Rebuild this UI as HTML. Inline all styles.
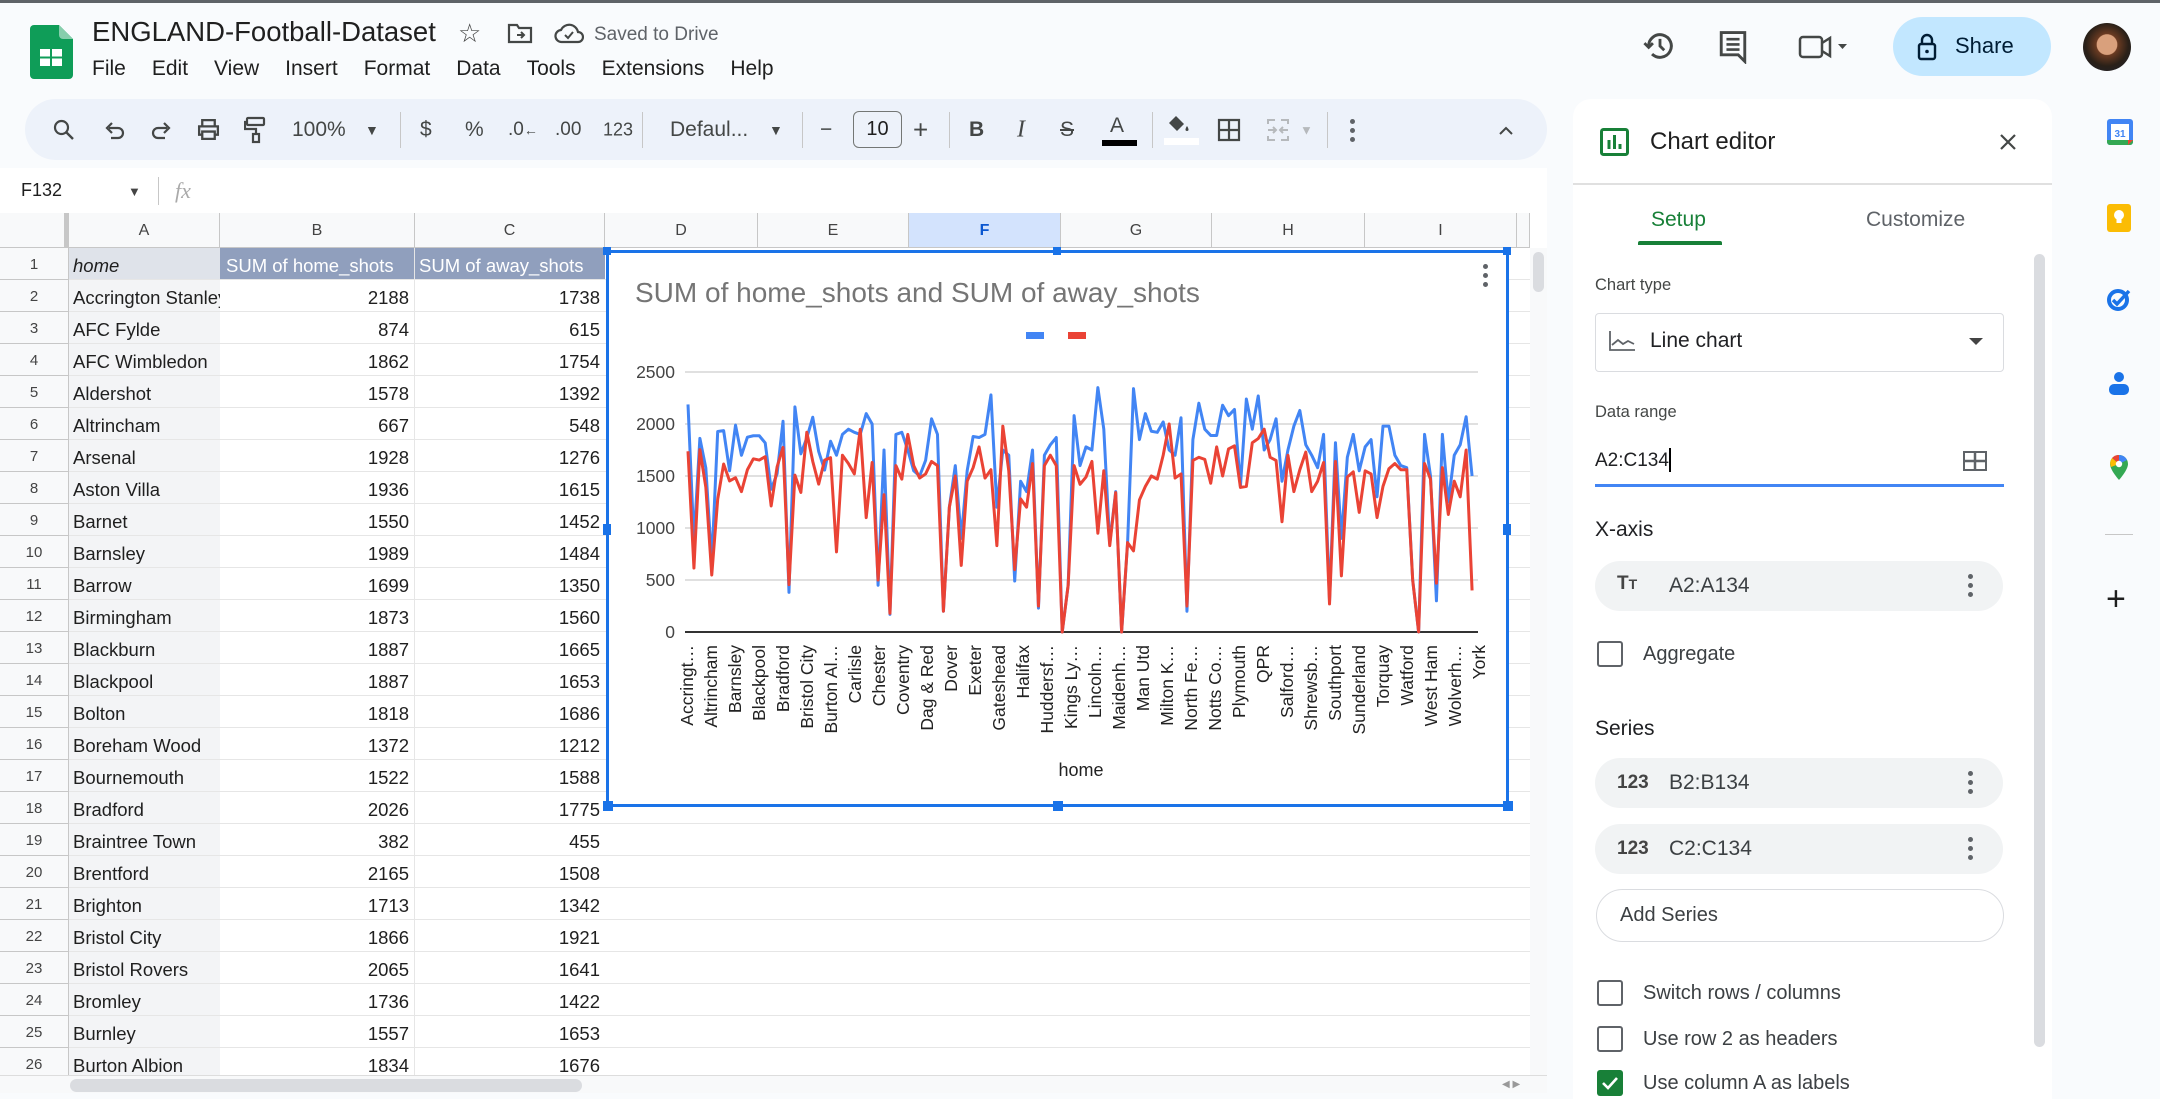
<!DOCTYPE html>
<html><head><meta charset="utf-8">
<style>
*{box-sizing:border-box;margin:0;padding:0}
body{width:2160px;height:1093px;overflow:hidden;background:#f9fbfd;font-family:"Liberation Sans",Arial,sans-serif;color:#1f1f1f;position:relative}
.a{position:absolute}
.menu span{margin-right:26px}
.tb{position:absolute;top:130px;transform:translateY(-50%);color:#444746;font-size:21px}
.sep{position:absolute;top:112px;width:1px;height:36px;background:#c7c7c7}
.ch{position:absolute;top:213px;height:35px;border-right:1px solid #c7c7c7;border-bottom:1px solid #c7c7c7;background:#f8f9fa;font-size:16px;color:#444;text-align:center;line-height:35px}
.row{position:absolute;left:0;height:32px;width:1530px;font-size:18.5px;line-height:35px}
.row .n{position:absolute;left:0;width:69px;height:32px;background:#f8f9fa;border-right:1px solid #c7c7c7;border-bottom:1px solid #c7c7c7;text-align:center;font-size:15px;color:#444;line-height:33px}
.row .c1{position:absolute;left:69px;width:151px;height:32px;background:#f3f4f6;padding-left:4px;white-space:nowrap;overflow:hidden;border-bottom:1px solid #e6e6e6}
.row .c2{position:absolute;left:220px;width:195px;height:32px;text-align:right;padding-right:5px;border-bottom:1px solid #e6e6e6;border-right:1px solid #e6e6e6}
.row .c3{position:absolute;left:415px;width:190px;height:32px;text-align:right;padding-right:5px;border-bottom:1px solid #e6e6e6}
.row .rest{position:absolute;left:605px;width:925px;height:32px;border-bottom:1px solid #e6e6e6}
.lbl{font-size:16.5px;color:#444746}
.chip{position:absolute;left:1595px;width:408px;height:50px;border-radius:25px;background:#f1f3f4}
.chip .t{position:absolute;left:74px;top:13px;font-size:21px;color:#3c4043}
.chip .ic{position:absolute;left:22px;top:14px;font-size:19px;font-weight:bold;color:#444}
.chip .dots{position:absolute;right:30px;top:13px;width:5px}
.dots i{display:block;width:5px;height:5px;border-radius:50%;background:#5f6368;margin-bottom:4px}
.cb{position:absolute;left:1597px;width:26px;height:26px;border:2.5px solid #5f6368;border-radius:3px}
.cbt{position:absolute;left:1643px;font-size:20px;color:#3c4043}
</style></head><body>
<div class="a" style="left:0;top:0;width:2160px;height:3px;background:#5f6368"></div>

<svg class="a" style="left:30px;top:25px" width="43" height="54" viewBox="0 0 43 54"><path d="M4 0h25l14 14v36a4 4 0 0 1-4 4H4a4 4 0 0 1-4-4V4a4 4 0 0 1 4-4z" fill="#0f9d58"/><path d="M29 0v10a4 4 0 0 0 4 4h10z" fill="#87ceac"/><rect x="10" y="24" width="22" height="17" fill="#fff"/><rect x="20" y="24" width="2" height="17" fill="#0f9d58"/><rect x="10" y="31.5" width="22" height="2" fill="#0f9d58"/></svg>
<div class="a" style="left:92px;top:16px;font-size:27.5px;color:#1f1f1f">ENGLAND-Football-Dataset</div>
<div class="a" style="left:458px;top:18px;font-size:26px;color:#444">☆</div>
<svg class="a" style="left:507px;top:22px" width="26" height="22" viewBox="0 0 26 22"><path d="M2 3h8l2 3h12v14H2z" fill="none" stroke="#444746" stroke-width="2.2"/><path d="M10 13h7m-3-3l3 3-3 3" fill="none" stroke="#444746" stroke-width="2"/></svg>
<svg class="a" style="left:554px;top:22px" width="30" height="22" viewBox="0 0 30 22"><path d="M8 20a6 6 0 0 1-1-12 9 9 0 0 1 17 2 5 5 0 0 1 0 10z" fill="none" stroke="#444746" stroke-width="2.2"/><path d="M11 13l3 3 5-6" fill="none" stroke="#444746" stroke-width="2"/></svg>
<div class="a" style="left:594px;top:24px;font-size:19px;color:#5f6368">Saved to Drive</div>
<div class="a menu" style="left:92px;top:57px;font-size:21px;color:#1f1f1f;white-space:nowrap"><span>File</span><span>Edit</span><span>View</span><span>Insert</span><span>Format</span><span>Data</span><span>Tools</span><span>Extensions</span><span>Help</span></div>

<svg class="a" style="left:1643px;top:29px" width="34" height="34" viewBox="0 0 24 24"><path d="M4 12a8 8 0 1 1 2.4 5.7" fill="none" stroke="#444746" stroke-width="2.1"/><path d="M1 10l3 3 3-3" fill="none" stroke="#444746" stroke-width="2"/><path d="M12 7v5l3 3" fill="none" stroke="#444746" stroke-width="2"/></svg>
<svg class="a" style="left:1717px;top:30px" width="32" height="34" viewBox="0 0 24 26"><path d="M3 2h18v17H21v5l-5-5H3z" fill="none" stroke="#444746" stroke-width="2.2"/><path d="M7 7h10M7 11h10M7 15h10" stroke="#444746" stroke-width="2"/></svg>
<svg class="a" style="left:1798px;top:33px" width="50" height="28" viewBox="0 0 50 28"><rect x="2" y="4" width="22" height="20" rx="3" fill="none" stroke="#444746" stroke-width="2.5"/><path d="M24 10l8-5v18l-8-5" fill="none" stroke="#444746" stroke-width="2.5"/><path d="M40 11h9l-4.5 5z" fill="#444746"/></svg>
<div class="a" style="left:1893px;top:17px;width:158px;height:59px;border-radius:30px;background:#c2e7ff"></div>
<svg class="a" style="left:1917px;top:33px" width="20" height="28" viewBox="0 0 20 28"><path d="M5 11V7a5 5 0 0 1 10 0v4" fill="none" stroke="#001d35" stroke-width="2.4"/><rect x="2" y="11" width="16" height="15" rx="2" fill="none" stroke="#001d35" stroke-width="2.4"/><circle cx="10" cy="18.5" r="1.8" fill="#001d35"/></svg>
<div class="a" style="left:1955px;top:33px;font-size:22px;color:#001d35">Share</div>
<div class="a" style="left:2083px;top:23px;width:48px;height:48px;border-radius:50%;background:radial-gradient(circle at 50% 45%,#d9a07c 0 28%,#6b3b22 30%,#2a2018 60%,#1c2230 100%)"></div>

<div class="a" style="left:25px;top:99px;width:1522px;height:61px;border-radius:31px;background:#edf2fa"></div>
<svg class="a" style="left:52px;top:118px" width="24" height="24" viewBox="0 0 24 24"><circle cx="9.5" cy="9.5" r="6.5" fill="none" stroke="#444746" stroke-width="2.2"/><path d="M14 14l7 7" stroke="#444746" stroke-width="2.4"/></svg>
<svg class="a" style="left:104px;top:119px" width="22" height="22" viewBox="0 0 22 22"><path d="M5 9h9a5 5 0 0 1 0 10H7" fill="none" stroke="#444746" stroke-width="2.2"/><path d="M8 4L3 9l5 5" fill="none" stroke="#444746" stroke-width="2.2"/></svg>
<svg class="a" style="left:150px;top:119px" width="22" height="22" viewBox="0 0 22 22"><path d="M17 9H8a5 5 0 0 0 0 10h7" fill="none" stroke="#444746" stroke-width="2.2"/><path d="M14 4l5 5-5 5" fill="none" stroke="#444746" stroke-width="2.2"/></svg>
<svg class="a" style="left:196px;top:117px" width="25" height="25" viewBox="0 0 24 24"><path d="M6 8V3h12v5M6 17H3V9h18v8h-3M6 14h12v7H6z" fill="none" stroke="#444746" stroke-width="2.2"/></svg>
<svg class="a" style="left:244px;top:116px" width="24" height="28" viewBox="0 0 24 28"><rect x="3" y="2" width="17" height="7" rx="1" fill="none" stroke="#444746" stroke-width="2.2"/><path d="M3 6H1v7h11v5" fill="none" stroke="#444746" stroke-width="2.2"/><rect x="9" y="18" width="6" height="8" fill="none" stroke="#444746" stroke-width="2.2"/></svg>
<div class="tb" style="left:292px">100%</div>
<div class="tb" style="left:365px;font-size:14px">▼</div>
<div class="sep" style="left:400px"></div>
<div class="tb" style="left:420px">$</div>
<div class="tb" style="left:465px">%</div>
<div class="tb" style="left:508px;font-size:19px">.0<span style="font-size:14px">←</span></div>
<div class="tb" style="left:555px;font-size:19px">.00</div>
<div class="tb" style="left:603px;font-size:18px">123</div>
<div class="sep" style="left:642px"></div>
<div class="tb" style="left:670px">Defaul...</div>
<div class="tb" style="left:769px;font-size:14px">▼</div>
<div class="sep" style="left:802px"></div>
<div class="tb" style="left:820px">−</div>
<div class="a" style="left:853px;top:111px;width:49px;height:37px;border:1.5px solid #747775;border-radius:6px;font-size:20px;text-align:center;line-height:34px;color:#1f1f1f">10</div>
<div class="tb" style="left:913px;font-size:26px">+</div>
<div class="sep" style="left:949px"></div>
<div class="tb" style="left:969px;font-weight:bold">B</div>
<div class="tb" style="left:1017px;font-style:italic;font-family:'Liberation Serif',serif;font-size:24px">I</div>
<div class="tb" style="left:1060px;text-decoration:line-through">S</div>
<div class="tb" style="left:1110px;top:126px">A</div>
<div class="a" style="left:1102px;top:140px;width:35px;height:6px;background:#000"></div>
<div class="sep" style="left:1152px"></div>
<svg class="a" style="left:1166px;top:114px" width="26" height="22" viewBox="0 0 26 22"><path d="M10 2l8 8-7 7-8-8z" fill="#444746"/><path d="M21 12c-2 3-2 5 0 5s2-2 0-5z" fill="#444746"/></svg>
<div class="a" style="left:1164px;top:138px;width:35px;height:7px;background:#fff"></div>
<svg class="a" style="left:1217px;top:118px" width="24" height="24" viewBox="0 0 24 24"><path d="M2 2h20v20H2zM12 2v20M2 12h20" fill="none" stroke="#444746" stroke-width="2.2"/></svg>
<svg class="a" style="left:1266px;top:118px" width="24" height="24" viewBox="0 0 24 24"><path d="M2 6V2h7M15 2h7v4M2 18v4h7M15 22h7v-4M2 12h8M14 12h8M7 9l3 3-3 3M17 9l-3 3 3 3" fill="none" stroke="#b6b9bc" stroke-width="2"/></svg>
<div class="tb" style="left:1300px;font-size:13px;color:#b6b9bc">▼</div>
<div class="sep" style="left:1327px"></div>
<div class="a dots" style="left:1350px;top:119px"><i></i><i></i><i></i></div>
<svg class="a" style="left:1498px;top:124px" width="16" height="12" viewBox="0 0 16 12"><path d="M2 10l6-6 6 6" fill="none" stroke="#444746" stroke-width="2"/></svg>

<div class="a" style="left:0;top:168px;width:1547px;height:45px;background:#fff"></div>
<div class="a" style="left:21px;top:180px;font-size:18px">F132</div>
<div class="a" style="left:128px;top:184px;font-size:13px;color:#444">▼</div>
<div class="a" style="left:158px;top:177px;width:1px;height:28px;background:#c7c7c7"></div>
<div class="a" style="left:175px;top:178px;font-size:22px;color:#aaa;font-style:italic;font-family:'Liberation Serif',serif">fx</div>

<div class="a" style="left:0;top:213px;width:1547px;height:880px;background:#fff"></div>
<div class="ch" style="left:0;width:69px;border-right:5px solid #c7c7c7"></div>
<div class="ch" style="left:69px;width:151px">A</div>
<div class="ch" style="left:220px;width:195px">B</div>
<div class="ch" style="left:415px;width:190px">C</div>
<div class="ch" style="left:605px;width:153px">D</div>
<div class="ch" style="left:758px;width:151px">E</div>
<div class="ch" style="left:909px;width:152px;background:#d3e3fd;font-weight:bold;color:#0b57d0">F</div>
<div class="ch" style="left:1061px;width:151px">G</div>
<div class="ch" style="left:1212px;width:153px">H</div>
<div class="ch" style="left:1365px;width:152px">I</div>
<div class="ch" style="left:1517px;width:13px"></div>

<div class="row" style="top:248px"><div class="n">1</div><div class="c1" style="background:#dfe3ea;font-style:italic">home</div><div class="c2" style="background:#909fbd;color:#fff;text-align:left;padding-left:6px;white-space:nowrap">SUM of home_shots</div><div class="c3" style="background:#909fbd;color:#fff;text-align:left;padding-left:4px;white-space:nowrap">SUM of away_shots</div><div class="rest"></div></div>
<div class="row" style="top:280px"><div class="n">2</div><div class="c1">Accrington Stanley</div><div class="c2">2188</div><div class="c3">1738</div><div class="rest"></div></div>
<div class="row" style="top:312px"><div class="n">3</div><div class="c1">AFC Fylde</div><div class="c2">874</div><div class="c3">615</div><div class="rest"></div></div>
<div class="row" style="top:344px"><div class="n">4</div><div class="c1">AFC Wimbledon</div><div class="c2">1862</div><div class="c3">1754</div><div class="rest"></div></div>
<div class="row" style="top:376px"><div class="n">5</div><div class="c1">Aldershot</div><div class="c2">1578</div><div class="c3">1392</div><div class="rest"></div></div>
<div class="row" style="top:408px"><div class="n">6</div><div class="c1">Altrincham</div><div class="c2">667</div><div class="c3">548</div><div class="rest"></div></div>
<div class="row" style="top:440px"><div class="n">7</div><div class="c1">Arsenal</div><div class="c2">1928</div><div class="c3">1276</div><div class="rest"></div></div>
<div class="row" style="top:472px"><div class="n">8</div><div class="c1">Aston Villa</div><div class="c2">1936</div><div class="c3">1615</div><div class="rest"></div></div>
<div class="row" style="top:504px"><div class="n">9</div><div class="c1">Barnet</div><div class="c2">1550</div><div class="c3">1452</div><div class="rest"></div></div>
<div class="row" style="top:536px"><div class="n">10</div><div class="c1">Barnsley</div><div class="c2">1989</div><div class="c3">1484</div><div class="rest"></div></div>
<div class="row" style="top:568px"><div class="n">11</div><div class="c1">Barrow</div><div class="c2">1699</div><div class="c3">1350</div><div class="rest"></div></div>
<div class="row" style="top:600px"><div class="n">12</div><div class="c1">Birmingham</div><div class="c2">1873</div><div class="c3">1560</div><div class="rest"></div></div>
<div class="row" style="top:632px"><div class="n">13</div><div class="c1">Blackburn</div><div class="c2">1887</div><div class="c3">1665</div><div class="rest"></div></div>
<div class="row" style="top:664px"><div class="n">14</div><div class="c1">Blackpool</div><div class="c2">1887</div><div class="c3">1653</div><div class="rest"></div></div>
<div class="row" style="top:696px"><div class="n">15</div><div class="c1">Bolton</div><div class="c2">1818</div><div class="c3">1686</div><div class="rest"></div></div>
<div class="row" style="top:728px"><div class="n">16</div><div class="c1">Boreham Wood</div><div class="c2">1372</div><div class="c3">1212</div><div class="rest"></div></div>
<div class="row" style="top:760px"><div class="n">17</div><div class="c1">Bournemouth</div><div class="c2">1522</div><div class="c3">1588</div><div class="rest"></div></div>
<div class="row" style="top:792px"><div class="n">18</div><div class="c1">Bradford</div><div class="c2">2026</div><div class="c3">1775</div><div class="rest"></div></div>
<div class="row" style="top:824px"><div class="n">19</div><div class="c1">Braintree Town</div><div class="c2">382</div><div class="c3">455</div><div class="rest"></div></div>
<div class="row" style="top:856px"><div class="n">20</div><div class="c1">Brentford</div><div class="c2">2165</div><div class="c3">1508</div><div class="rest"></div></div>
<div class="row" style="top:888px"><div class="n">21</div><div class="c1">Brighton</div><div class="c2">1713</div><div class="c3">1342</div><div class="rest"></div></div>
<div class="row" style="top:920px"><div class="n">22</div><div class="c1">Bristol City</div><div class="c2">1866</div><div class="c3">1921</div><div class="rest"></div></div>
<div class="row" style="top:952px"><div class="n">23</div><div class="c1">Bristol Rovers</div><div class="c2">2065</div><div class="c3">1641</div><div class="rest"></div></div>
<div class="row" style="top:984px"><div class="n">24</div><div class="c1">Bromley</div><div class="c2">1736</div><div class="c3">1422</div><div class="rest"></div></div>
<div class="row" style="top:1016px"><div class="n">25</div><div class="c1">Burnley</div><div class="c2">1557</div><div class="c3">1653</div><div class="rest"></div></div>
<div class="row" style="top:1048px;height:27px;overflow:hidden"><div class="n">26</div><div class="c1">Burton Albion</div><div class="c2">1834</div><div class="c3">1676</div><div class="rest"></div></div>
<div class="a" style="left:0;top:1075px;width:1547px;height:18px;background:#f8f9fa;border-top:1px solid #ddd"></div>
<div class="a" style="left:70px;top:1079px;width:512px;height:13px;border-radius:7px;background:#dadce0"></div>
<div class="a" style="left:1530px;top:248px;width:17px;height:827px;background:#f8f9fa"></div>
<div class="a" style="left:1533px;top:252px;width:11px;height:40px;border-radius:6px;background:#dadce0"></div>
<div class="a" style="left:1502px;top:1079px;font-size:10px;color:#999">◀ ▶</div>

<div class="a" style="left:606px;top:250px;width:903px;height:557px;background:#fff;border:3px solid #1a73e8"></div>
<div class="a" style="left:603px;top:247px;width:8px;height:8px;background:#1a73e8"></div>
<div class="a" style="left:1053px;top:247px;width:8px;height:8px;background:#1a73e8"></div>
<div class="a" style="left:1503px;top:247px;width:8px;height:8px;background:#1a73e8"></div>
<div class="a" style="left:603px;top:524px;width:8px;height:11px;background:#1a73e8"></div>
<div class="a" style="left:1503px;top:524px;width:8px;height:11px;background:#1a73e8"></div>
<div class="a" style="left:603px;top:801px;width:10px;height:10px;background:#1a73e8"></div>
<div class="a" style="left:1053px;top:801px;width:10px;height:10px;background:#1a73e8"></div>
<div class="a" style="left:1503px;top:801px;width:10px;height:10px;background:#1a73e8"></div>
<div class="a dots" style="left:1483px;top:264px"><i></i><i></i><i></i></div>
<svg class="a" style="left:0;top:0" width="2160" height="1093">
<text x="635" y="302" font-size="28" fill="#757575" font-family="Liberation Sans">SUM of home_shots and SUM of away_shots</text>
<rect x="1026" y="332" width="18" height="7" fill="#4285f4"/><rect x="1068" y="332" width="18" height="7" fill="#ea4335"/>
<g stroke="#e0e0e0" stroke-width="2"><path d="M685 372H1478M685 424H1478M685 476H1478M685 528H1478M685 580H1478"/></g>
<path d="M685 632H1478" stroke="#333" stroke-width="2"/>
<g font-size="17.5" fill="#444" text-anchor="end" font-family="Liberation Sans"><text x="675" y="378">2500</text><text x="675" y="430">2000</text><text x="675" y="482">1500</text><text x="675" y="534">1000</text><text x="675" y="586">500</text><text x="675" y="638">0</text></g>
<g transform="translate(688,632) scale(5.94,-0.104)" fill="none" stroke-width="3" stroke-linejoin="round">
<polyline vector-effect="non-scaling-stroke" stroke="#4285f4" points="0,2188 1,874 2,1862 3,1578 4,667 5,1928 6,1936 7,1550 8,1989 9,1699 10,1873 11,1887 12,1887 13,1818 14,1372 15,1522 16,2026 17,382 18,2165 19,1713 20,1866 21,2065 22,1736 23,1557 24,1834 25,1700 26,1900 27,1950 28,1920 29,1900 30,2100 31,2000 32,450 33,1750 34,170 35,1900 36,1920 37,1750 38,1550 39,1500 40,1650 41,2050 42,1900 43,200 44,1200 45,1600 46,900 47,1550 48,1880 49,1870 50,1900 51,2280 52,1200 53,1750 54,1700 55,490 56,1450 57,1350 58,1750 59,230 60,1700 61,1800 62,1870 63,0 64,450 65,2080 66,1600 67,1780 68,1750 69,2350 70,1950 71,850 72,1350 73,0 74,850 75,2340 76,1850 77,2100 78,1930 79,1920 80,2020 81,1750 82,1700 83,2060 84,200 85,1850 86,2200 87,1950 88,1890 89,1890 90,2180 91,2080 92,2140 93,1400 94,2240 95,1950 96,2270 97,1750 98,1850 99,2050 100,1450 101,1750 102,1980 103,2130 104,1800 105,1700 106,1580 107,1900 108,300 109,1820 110,900 111,1680 112,1900 113,1550 114,1780 115,1850 116,1300 117,1980 118,1980 119,1700 120,1600 121,1580 122,500 123,0 124,1900 125,1500 126,300 127,1900 128,1250 129,1700 130,1800 131,2070 132,1500"/>
<polyline vector-effect="non-scaling-stroke" stroke="#ea4335" points="0,1738 1,615 2,1754 3,1392 4,548 5,1276 6,1615 7,1452 8,1484 9,1350 10,1560 11,1665 12,1653 13,1686 14,1212 15,1588 16,1775 17,455 18,1508 19,1342 20,1921 21,1641 22,1422 23,1653 24,1676 25,770 26,1700 27,1620 28,1520 29,1950 30,1100 31,1630 32,500 33,1320 34,180 35,1600 36,1470 37,1900 38,1600 39,1480 40,1520 41,1640 42,1600 43,200 44,1200 45,1500 46,640 47,1450 48,1580 49,1780 50,1480 51,1560 52,830 53,1980 54,1550 55,600 56,1280 57,1200 58,1620 59,250 60,1600 61,1700 62,1600 63,0 64,450 65,1600 66,1420 67,1490 68,1640 69,950 70,1550 71,830 72,1340 73,0 74,860 75,780 76,1270 77,1400 78,1500 79,1470 80,1700 81,2000 82,1480 83,1520 84,250 85,1650 86,1680 87,1660 88,1430 89,1780 90,1500 91,1760 92,1790 93,1390 94,1400 95,1820 96,1860 97,1950 98,1680 99,1650 100,1060 101,1700 102,1350 103,1560 104,1730 105,1350 106,1450 107,1630 108,270 109,1640 110,540 111,1490 112,1540 113,1150 114,1550 115,1520 116,1100 117,1400 118,1570 119,1620 120,1560 121,1560 122,500 123,0 124,1620 125,1470 126,470 127,1580 128,1130 129,1450 130,1300 131,1750 132,400"/>
</g>
<g font-size="17.5" fill="#222" font-family="Liberation Sans" text-anchor="end">
<text transform="translate(693,645) rotate(-90)">Accringt…</text>
<text transform="translate(717,645) rotate(-90)">Altrincham</text>
<text transform="translate(741,645) rotate(-90)">Barnsley</text>
<text transform="translate(765,645) rotate(-90)">Blackpool</text>
<text transform="translate(789,645) rotate(-90)">Bradford</text>
<text transform="translate(813,645) rotate(-90)">Bristol City</text>
<text transform="translate(837,645) rotate(-90)">Burton Al…</text>
<text transform="translate(861,645) rotate(-90)">Carlisle</text>
<text transform="translate(885,645) rotate(-90)">Chester</text>
<text transform="translate(909,645) rotate(-90)">Coventry</text>
<text transform="translate(933,645) rotate(-90)">Dag &amp; Red</text>
<text transform="translate(957,645) rotate(-90)">Dover</text>
<text transform="translate(981,645) rotate(-90)">Exeter</text>
<text transform="translate(1005,645) rotate(-90)">Gateshead</text>
<text transform="translate(1029,645) rotate(-90)">Halifax</text>
<text transform="translate(1053,645) rotate(-90)">Huddersf…</text>
<text transform="translate(1077,645) rotate(-90)">Kings Ly…</text>
<text transform="translate(1101,645) rotate(-90)">Lincoln…</text>
<text transform="translate(1125,645) rotate(-90)">Maidenh…</text>
<text transform="translate(1149,645) rotate(-90)">Man Utd</text>
<text transform="translate(1173,645) rotate(-90)">Milton K…</text>
<text transform="translate(1197,645) rotate(-90)">North Fe…</text>
<text transform="translate(1221,645) rotate(-90)">Notts Co…</text>
<text transform="translate(1245,645) rotate(-90)">Plymouth</text>
<text transform="translate(1269,645) rotate(-90)">QPR</text>
<text transform="translate(1293,645) rotate(-90)">Salford…</text>
<text transform="translate(1317,645) rotate(-90)">Shrewsb…</text>
<text transform="translate(1341,645) rotate(-90)">Southport</text>
<text transform="translate(1365,645) rotate(-90)">Sunderland</text>
<text transform="translate(1389,645) rotate(-90)">Torquay</text>
<text transform="translate(1413,645) rotate(-90)">Watford</text>
<text transform="translate(1437,645) rotate(-90)">West Ham</text>
<text transform="translate(1461,645) rotate(-90)">Wolverh…</text>
<text transform="translate(1485,645) rotate(-90)">York</text>
</g>
<text x="1081" y="776" font-size="18" fill="#222" text-anchor="middle" font-family="Liberation Sans">home</text>
</svg>

<div class="a" style="left:1573px;top:99px;width:479px;height:1000px;background:#fff;border-radius:18px 18px 0 0"></div>
<svg class="a" style="left:1600px;top:128px" width="29" height="28" viewBox="0 0 29 28"><rect x="1.5" y="1.5" width="26" height="25" rx="2" fill="none" stroke="#188038" stroke-width="3"/><path d="M9 12v9M14.5 7v14M20 16v5" stroke="#188038" stroke-width="3"/></svg>
<div class="a" style="left:1650px;top:128px;font-size:24px;color:#1f1f1f">Chart editor</div>
<svg class="a" style="left:1999px;top:133px" width="18" height="18" viewBox="0 0 18 18"><path d="M2 2l14 14M16 2L2 16" stroke="#444746" stroke-width="2.2"/></svg>
<div class="a" style="left:1573px;top:183px;width:479px;height:2px;background:#e0e0e0"></div>
<div class="a" style="left:1651px;top:208px;font-size:21px;color:#188038">Setup</div>
<div class="a" style="left:1638px;top:241px;width:84px;height:4px;border-radius:2px 2px 0 0;background:#188038"></div>
<div class="a" style="left:1866px;top:208px;font-size:21px;color:#5f6368">Customize</div>
<div class="a" style="left:2034px;top:254px;width:11px;height:793px;border-radius:6px;background:#dadce0"></div>

<div class="a lbl" style="left:1595px;top:276px">Chart type</div>
<div class="a" style="left:1595px;top:313px;width:409px;height:59px;border:1.5px solid #dadce0;border-radius:4px"></div>
<svg class="a" style="left:1608px;top:330px" width="28" height="22" viewBox="0 0 28 22"><path d="M2 1v19h25" fill="none" stroke="#5f6368" stroke-width="1.8"/><path d="M4 15l6-5 5 4 5-3 6 3" fill="none" stroke="#5f6368" stroke-width="1.8"/></svg>
<div class="a" style="left:1650px;top:329px;font-size:21px;color:#202124">Line chart</div>
<svg class="a" style="left:1969px;top:338px" width="14" height="8"><path d="M0 0h14L7 7z" fill="#444"/></svg>

<div class="a lbl" style="left:1595px;top:403px">Data range</div>
<div class="a" style="left:1595px;top:450px;font-size:19px;color:#202124">A2:C134</div>
<div class="a" style="left:1669px;top:448px;width:2px;height:24px;background:#000"></div>
<svg class="a" style="left:1963px;top:451px" width="24" height="20" viewBox="0 0 24 20"><rect x="1" y="1" width="22" height="18" fill="none" stroke="#5f6368" stroke-width="2"/><path d="M12 1v18M1 10h22" stroke="#5f6368" stroke-width="2.5"/></svg>
<div class="a" style="left:1595px;top:484px;width:409px;height:3px;background:#4285f4"></div>

<div class="a" style="left:1595px;top:518px;font-size:21px;color:#202124">X-axis</div>
<div class="chip" style="top:561px"><div class="ic" style="top:12px">T<span style="font-size:14px">T</span></div><div class="t">A2:A134</div><div class="dots"><i></i><i></i><i></i></div></div>
<div class="cb" style="top:641px"></div><div class="cbt" style="top:643px">Aggregate</div>

<div class="a" style="left:1595px;top:717px;font-size:21px;color:#202124">Series</div>
<div class="chip" style="top:758px"><div class="ic">123</div><div class="t">B2:B134</div><div class="dots"><i></i><i></i><i></i></div></div>
<div class="chip" style="top:824px"><div class="ic">123</div><div class="t">C2:C134</div><div class="dots"><i></i><i></i><i></i></div></div>
<div class="a" style="left:1596px;top:889px;width:408px;height:53px;border:1.5px solid #dadce0;border-radius:27px"></div>
<div class="a" style="left:1620px;top:904px;font-size:20px;color:#3c4043">Add Series</div>

<div class="cb" style="top:980px"></div><div class="cbt" style="top:982px">Switch rows / columns</div>
<div class="cb" style="top:1026px"></div><div class="cbt" style="top:1028px">Use row 2 as headers</div>
<div class="a" style="left:1597px;top:1070px;width:26px;height:26px;border-radius:3px;background:#188038"></div>
<svg class="a" style="left:1601px;top:1076px" width="18" height="14"><path d="M2 7l5 5 9-10" fill="none" stroke="#fff" stroke-width="2.6"/></svg>
<div class="cbt" style="top:1072px">Use column A as labels</div>

<svg class="a" style="left:2106px;top:118px" width="28" height="28" viewBox="0 0 28 28"><rect x="1" y="1" width="26" height="26" rx="3" fill="#4285f4"/><rect x="5" y="6" width="18" height="16" fill="#fff"/><path d="M1 22h26v2a3 3 0 0 1-3 3H4a3 3 0 0 1-3-3z" fill="#34a853"/><path d="M22 22h5l-5 5z" fill="#ea4335"/><text x="14" y="19" font-size="10" fill="#4285f4" text-anchor="middle" font-family="Liberation Sans" font-weight="bold">31</text></svg>
<svg class="a" style="left:2106px;top:203px" width="26" height="30" viewBox="0 0 26 30"><rect x="1" y="1" width="24" height="28" rx="3" fill="#fbbc04"/><circle cx="13" cy="12" r="5" fill="#fff"/><rect x="10.5" y="16" width="5" height="4" fill="#fff"/></svg>
<svg class="a" style="left:2105px;top:286px" width="28" height="26" viewBox="0 0 28 26"><circle cx="13" cy="14" r="9" fill="none" stroke="#1a73e8" stroke-width="4"/><path d="M8 14l4 4 12-13" fill="none" stroke="#1a73e8" stroke-width="3.5"/></svg>
<svg class="a" style="left:2108px;top:370px" width="22" height="28" viewBox="0 0 22 28"><circle cx="11" cy="7" r="5" fill="#1a73e8"/><rect x="1" y="14" width="20" height="11" rx="5" fill="#1a73e8"/></svg>
<svg class="a" style="left:2108px;top:454px" width="22" height="28" viewBox="0 0 22 28"><path d="M11 1a9 9 0 0 1 9 9c0 6-9 16-9 16S2 16 2 10a9 9 0 0 1 9-9z" fill="#34a853"/><path d="M11 1a9 9 0 0 0-7 3l7 6z" fill="#ea4335"/><path d="M11 1a9 9 0 0 1 8 5l-8 4z" fill="#4285f4"/><path d="M4 4l7 6-8 3a9 9 0 0 1 1-9z" fill="#fbbc04"/><circle cx="11" cy="10" r="3.2" fill="#fff"/></svg>
<div class="a" style="left:2105px;top:534px;width:28px;height:1px;background:#c7c7c7"></div>
<div class="a" style="left:2106px;top:582px;font-size:34px;color:#1f1f1f;line-height:34px">+</div>
</body></html>
